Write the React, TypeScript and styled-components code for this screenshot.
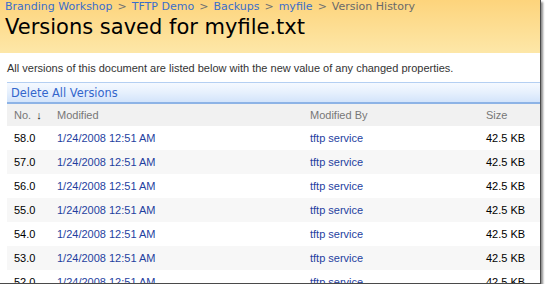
import React from "react";
import styled, { createGlobalStyle } from "styled-components";

const GlobalStyle = createGlobalStyle`
  html, body {
    margin: 0;
    padding: 0;
    background: #fff;
  }
`;

const versions = ["58.0", "57.0", "56.0", "55.0", "54.0", "53.0", "52.0"];

const crumbs = ["Branding Workshop", "TFTP Demo", "Backups", "myfile"];

const App = () => {
  return (
    <>
      <GlobalStyle />
      <Frame>
        <Header>
          <Breadcrumb>
            {crumbs.map((c) => (
              <React.Fragment key={c}>
                <CrumbLink>{c}</CrumbLink>
                <Sep>&gt;</Sep>
              </React.Fragment>
            ))}
            <Current>Version History</Current>
          </Breadcrumb>
          <Title>Versions saved for myfile.txt</Title>
        </Header>
        <Description>
          All versions of this document are listed below with the new value of any changed properties.
        </Description>
        <Toolbar>
          <ToolbarLink>Delete All Versions</ToolbarLink>
        </Toolbar>
        <Table>
          <HeadRow>
            <HeadCell $first>
              No. <Arrow>↓</Arrow>
            </HeadCell>
            <HeadCell>Modified</HeadCell>
            <HeadCell>Modified By</HeadCell>
            <HeadCell>Size</HeadCell>
          </HeadRow>
          {versions.map((v, i) => (
            <Row key={v} $alt={i % 2 === 1}>
              <Cell $first>{v}</Cell>
              <LinkCell>1/24/2008 12:51 AM</LinkCell>
              <LinkCell>tftp service</LinkCell>
              <Cell>42.5 KB</Cell>
            </Row>
          ))}
        </Table>
      </Frame>
    </>
  );
};

const Frame = styled.div`
  width: 540px;
  height: 283px;
  overflow: hidden;
  background: #fff;
  border-right: 1px solid #4a4a4a;
  border-bottom: 1px solid #4a4a4a;
  box-shadow: 2px 2px 2px rgba(0, 0, 0, 0.45);
`;

const Header = styled.div`
  height: 53px;
  background: linear-gradient(to bottom, #fdd47c 0%, #fde7a8 100%);
  padding: 0 0 0 5px;
  box-sizing: border-box;
`;

const Breadcrumb = styled.div`
  font-family: "DejaVu Sans", Verdana, sans-serif;
  font-size: 11px;
  line-height: 13px;
  display: flex;
  gap: 5px;
  white-space: nowrap;
`;

const CrumbLink = styled.span`
  color: #3a6ecb;
`;

const Sep = styled.span`
  color: #707070;
`;

const Current = styled.span`
  color: #6a6a6a;
`;

const Title = styled.h1`
  margin: 1px 0 0;
  font-family: "DejaVu Sans", Verdana, sans-serif;
  font-weight: normal;
  font-size: 21px;
  line-height: 26px;
  color: #000;
  white-space: nowrap;
`;

const Description = styled.p`
  margin: 0;
  padding: 9px 0 0 7px;
  height: 29px;
  box-sizing: border-box;
  font-family: "Liberation Sans", Tahoma, sans-serif;
  font-size: 11px;
  line-height: 13px;
  color: #333;
  white-space: nowrap;
`;

const Toolbar = styled.div`
  margin-left: 7px;
  height: 22px;
  box-sizing: border-box;
  display: flex;
  align-items: center;
  padding-left: 4px;
  background: linear-gradient(to bottom, #f5f9ff 0%, #e6f0fd 50%, #d3e4fb 100%);
  border-top: 1px solid #b4cff2;
  border-bottom: 2px solid #8db3e6;
`;

const ToolbarLink = styled.span`
  font-family: "DejaVu Sans", Verdana, sans-serif;
  font-size: 11.4px;
  color: #3366cc;
`;

const Table = styled.div`
  margin-left: 7px;
  display: flex;
  flex-direction: column;
`;

const gridCols = `
  display: grid;
  grid-template-columns: 50px 253px 176px 1fr;
  align-items: center;
`;

const HeadRow = styled.div`
  ${gridCols}
  height: 22px;
  background: #f1f1f1;
`;

const Row = styled.div<{ $alt: boolean }>`
  ${gridCols}
  height: 24px;
  background: ${(p) => (p.$alt ? "#f7f7f7" : "#fff")};
`;

const HeadCell = styled.div<{ $first?: boolean }>`
  font-family: "Liberation Sans", Tahoma, sans-serif;
  font-size: 11px;
  color: #777;
  padding-left: ${(p) => (p.$first ? "7px" : "0")};
  white-space: nowrap;
`;

const Arrow = styled.span`
  color: #222;
  font-size: 11px;
  margin-left: 2px;
`;

const Cell = styled.div<{ $first?: boolean }>`
  font-family: "Liberation Sans", Tahoma, sans-serif;
  font-size: 11px;
  color: #000;
  padding-left: ${(p) => (p.$first ? "7px" : "0")};
  white-space: nowrap;
`;

const LinkCell = styled.div`
  font-family: "Liberation Sans", Tahoma, sans-serif;
  font-size: 11px;
  color: #1f3f9f;
  white-space: nowrap;
`;

export default App;
